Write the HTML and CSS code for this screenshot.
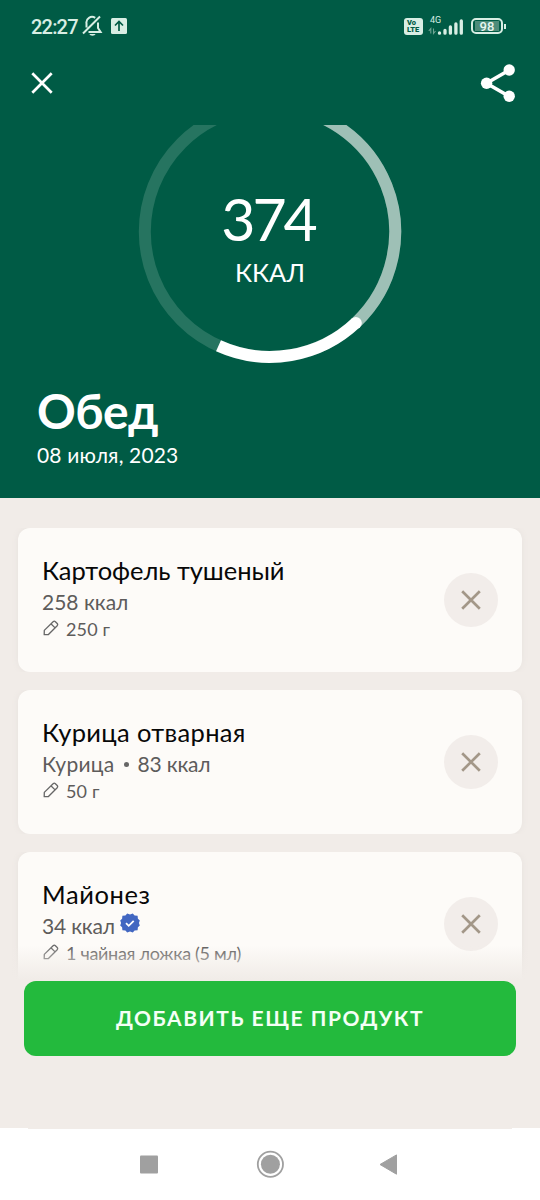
FILE: index.html
```html
<!DOCTYPE html>
<html lang="ru">
<head>
<meta charset="utf-8">
<title>Обед</title>
<link rel="stylesheet" href="styles.css">
</head>
<body>
<div class="screen">
  <header class="hero">
    <div class="status">
      <span class="time">22:27</span>
      <svg class="bell" width="22" height="22" viewBox="0 0 22 22" fill="none" stroke="#d8eee4" stroke-width="2"><path d="M4.500 12.500V8.500a5.600 5.600 0 0 1 8.700-5.600M16 7.500v5.500l2.600 4H6.500M1 18.500 18 1.500"/><path d="M7.300 19a3.300 2.500 0 0 0 6.300 0z" fill="#d8eee4" stroke="none"/></svg>
      <svg class="upload" width="16" height="16" viewBox="0 0 16 16"><rect width="16" height="16" rx="1.500" fill="#d8eee4"/><path d="M8 13V4M4 7.500l4-4 4 4" fill="none" stroke="#005b45" stroke-width="1.700"/></svg>
      <span class="volte"><span>Vo</span><span>LTE</span></span>
      <span class="network"><span class="gen">4G</span>
        <svg width="36" height="18" viewBox="0 0 36 18"><path d="M2.800 15.500v-5L.8 13M5.500 10.500v5l2-2.500" fill="none" stroke="#6fa493" stroke-width="1.100"/><g stroke="#d8eee4" stroke-width="3.300" stroke-linecap="round"><path d="M11.500 15v.2M17 12.500v2.700M22.400 9v6.200M27.900 6v9.200M33.300 3v12.200"/></g></svg>
      </span>
      <span class="battery"><span class="charge">98</span></span>
    </div>
    <div class="toolbar">
      <svg width="22" height="22" viewBox="0 0 22 22" stroke="#fff" stroke-width="2.700"><path d="m1.300 1.300 19.400 19.400M20.700 1.300 1.300 20.700"/></svg>
      <svg width="36" height="38" viewBox="0 0 36 38"><path d="M29 6.300 6.500 19.300 29 32.300" fill="none" stroke="#fff" stroke-width="3.600"/><g fill="#fff"><circle cx="29.200" cy="6" r="5.700"/><circle cx="6.600" cy="19.300" r="5.700"/><circle cx="29.200" cy="32.200" r="5.700"/></g></svg>
    </div>
    <div class="gauge">
      <svg class="ring" width="540" height="245" viewBox="0 125 540 245" fill="none" stroke-width="12">
        <circle cx="270" cy="231.700" r="125.200" stroke="#267460"/>
        <path d="M270 106.500A125.200 125.200 0 0 1 356.200 322.500" stroke="#9ec0b6"/>
        <path d="M356.200 322.500A125.200 125.200 0 0 1 218.500 345.800" stroke="#fff"/>
        <circle cx="355.800" cy="322.900" r="6" fill="#fff" stroke="none"/>
      </svg>
      <div class="total"><span class="kcal">374</span><span class="unit">ККАЛ</span></div>
    </div>
    <div class="heading">
      <h1>Обед</h1>
      <p class="date">08 июля, 2023</p>
    </div>
  </header>
  <main class="list">
    <article class="card">
      <div class="info">
        <h2 class="long">Картофель тушеный</h2>
        <p class="meta">258 ккал</p>
        <p class="portion"><svg class="pencil" viewBox="0 0 16 16"><path d="m1.300 10.400-.1 4.300h4L14.200 5.700a1.700 1.700 0 0 0 0-2.200L12.400 1.700a1.700 1.700 0 0 0-2.300 0zM7.900 3.800l4.200 4.100"/></svg><span>250 г</span></p>
      </div>
      <button class="remove"><svg viewBox="0 0 20 20"><path d="m1.200 1.200 17.600 17.600M18.800 1.200 1.200 18.800"/></svg></button>
    </article>
    <article class="card">
      <div class="info">
        <h2>Курица отварная</h2>
        <p class="meta"><span class="kind">Курица</span><i class="dot"></i><span class="tight">83 ккал</span></p>
        <p class="portion"><svg class="pencil" viewBox="0 0 16 16"><path d="m1.300 10.400-.1 4.300h4L14.200 5.700a1.700 1.700 0 0 0 0-2.200L12.400 1.700a1.700 1.700 0 0 0-2.300 0zM7.900 3.800l4.200 4.100"/></svg><span>50 г</span></p>
      </div>
      <button class="remove"><svg viewBox="0 0 20 20"><path d="m1.200 1.200 17.600 17.600M18.800 1.200 1.200 18.800"/></svg></button>
    </article>
    <article class="card">
      <div class="info">
        <h2 class="short">Майонез</h2>
        <p class="meta"><span class="tight">34 ккал</span><svg class="verified" width="20" height="20" viewBox="0 0 20 20"><path d="m10 1.500 2.800-1 1.800 2 3 .3.300 2.900 1.900 1.900-.9 2.400.9 2.400-1.900 1.900-.3 2.900-3 .3-1.800 2-2.800-1-2.800 1-1.800-2-3-.3-.3-2.900-1.900-1.900.9-2.400-.9-2.400 1.900-1.900.3-2.900 3-.3 1.800-2z" fill="#4267c1"/><path d="m6 10.200 2.700 2.600 5-4.900" fill="none" stroke="#fff" stroke-width="1.800"/></svg></p>
        <p class="portion serving"><svg class="pencil" viewBox="0 0 16 16"><path d="m1.300 10.400-.1 4.300h4L14.200 5.700a1.700 1.700 0 0 0 0-2.200L12.400 1.700a1.700 1.700 0 0 0-2.300 0zM7.900 3.800l4.200 4.100"/></svg><span>1 чайная ложка (5 мл)</span></p>
      </div>
      <button class="remove"><svg viewBox="0 0 20 20"><path d="m1.200 1.200 17.600 17.600M18.800 1.200 1.200 18.800"/></svg></button>
    </article>
  </main>
  <footer class="actions"><button class="add">ДОБАВИТЬ ЕЩЕ ПРОДУКТ</button></footer>
  <nav class="system">
    <svg width="540" height="72" viewBox="0 0 540 72"><path d="M28 .5h484" stroke="#f1ece8"/><rect x="140" y="27.500" width="18" height="18" rx="1" fill="#a0a0a0"/><circle cx="270.400" cy="36.200" r="12.600" fill="none" stroke="#a0a0a0" stroke-width="1.800"/><circle cx="270.400" cy="36.200" r="9.500" fill="#a0a0a0"/><path d="m380 36.500 16.500-9.600v19.300z" fill="#a0a0a0" stroke="#a0a0a0" stroke-linejoin="round"/></svg>
  </nav>
</div>
</body>
</html>
```
FILE: styles.css
```css
* { box-sizing: border-box; margin: 0; padding: 0; }
body { background: #f1ece8; font-family: Lato, "Open Sans", "Noto Sans", sans-serif; }
button { border: 0; font: inherit; }
svg { display: block; flex: none; }
.screen { width: 540px; height: 1200px; display: flex; flex-direction: column; overflow: hidden; }
.hero { height: 498px; flex: none; background: #005b45; color: #fff; }
.status { height: 52px; padding: 0 37px 0 31px; display: flex; align-items: center; color: #d8eee4; font-family: Roboto, sans-serif; }
.time { width: 51px; font-size: 20px; font-weight: 500; letter-spacing: -.8px; white-space: nowrap; padding-top: 1px; }
.upload { margin: 0 auto 0 7px; }
.volte { width: 19px; height: 17px; background: #d8eee4; color: #005b45; border-radius: 3px; padding: 1px 2px 0 3px; display: grid; grid-template-rows: 7px 7px; font: 900 7.500px/8px Roboto, sans-serif; }
.network { width: 36px; height: 22px; margin: -3px 0 0 5px; display: grid; }
.network > * { grid-area: 1 / 1; }
.network svg { align-self: end; }
.gen { font-size: 9px; line-height: 9px; padding-left: 2px; padding-top: 2px; }
.battery { width: 32px; height: 16px; margin: 0 0 1px 7px; border: 2px solid #d8eee4; border-radius: 5px; padding: 1px 2px; position: relative; }
.battery::after { content: ""; position: absolute; left: 31px; top: 4px; width: 2px; height: 5px; background: #d8eee4; }
.charge { display: block; height: 10px; background: #4e8c7a; text-align: center; font-size: 13px; line-height: 11px; font-weight: 500; color: #e8f6f0; }
.toolbar { height: 73px; padding: 12px 24px 0 31px; display: flex; justify-content: space-between; }
.toolbar svg:first-child { margin-top: 8px; }
.gauge { height: 245px; display: grid; }
.gauge > * { grid-area: 1 / 1; }
.total { padding-top: 58px; display: flex; flex-direction: column; align-items: center; }
.kcal { font-size: 59px; line-height: 72px; letter-spacing: -3px; margin-right: 4px; }
.unit { font-size: 25.500px; line-height: 32px; margin-top: 1px; }
.heading { padding: 11px 0 0 37px; }
.heading h1 { font-size: 48px; line-height: 60px; font-weight: 700; letter-spacing: -.5px; }
.date { font-size: 21px; line-height: 26px; letter-spacing: .15px; margin-top: 1px; }
.list { height: 483px; flex: none; overflow: hidden; padding: 30px 18px 0; display: flex; flex-direction: column; gap: 18px; }
.card { height: 144px; flex: none; padding: 0 24px; border-radius: 12px; background: #fdfbf8; box-shadow: 0 0 6px #e7e2de; clip-path: inset(0 -6px); display: flex; justify-content: space-between; align-items: center; }
.info { margin-top: -3px; }
.info h2 { font-size: 25.500px; line-height: 32px; font-weight: 400; color: #080808; letter-spacing: .35px; white-space: nowrap; }
.info .long { letter-spacing: -.05px; }
.info .short { letter-spacing: .6px; }
.meta { display: flex; align-items: center; height: 28px; margin-top: 1px; font-size: 21px; color: #5d5c5b; white-space: nowrap; }
.kind { letter-spacing: .3px; }
.tight { letter-spacing: -.2px; }
.dot { width: 5px; height: 5px; border-radius: 50%; background: #666; margin: 3px 9px 0; }
.verified { margin: -4px 0 0 5px; }
.portion { display: flex; align-items: center; height: 28px; gap: 7px; padding-left: 1px; font-size: 18px; letter-spacing: .15px; color: #5d5c5b; white-space: nowrap; }
.serving { letter-spacing: -.3px; }
.pencil { width: 16px; height: 16px; margin-top: -2px; fill: none; stroke: #666; stroke-width: 1.300; stroke-linejoin: round; }
.remove { width: 54px; height: 54px; border-radius: 50%; background: #f2edea; display: grid; place-items: center; }
.remove svg { width: 20px; height: 20px; stroke: #a39788; stroke-width: 2.700; }
.actions { height: 183px; flex: none; margin-top: -36px; padding: 36px 24px 0; position: relative; background: linear-gradient(#f1ece800, #f1ece8 34px); }
.add { display: block; width: 492px; height: 75px; border-radius: 12px; padding-bottom: 3px; background: #23ba3d; color: #f4fff5; font-size: 21px; font-weight: 700; letter-spacing: 1.550px; white-space: nowrap; }
.system { height: 72px; flex: none; background: #fff; }
```
